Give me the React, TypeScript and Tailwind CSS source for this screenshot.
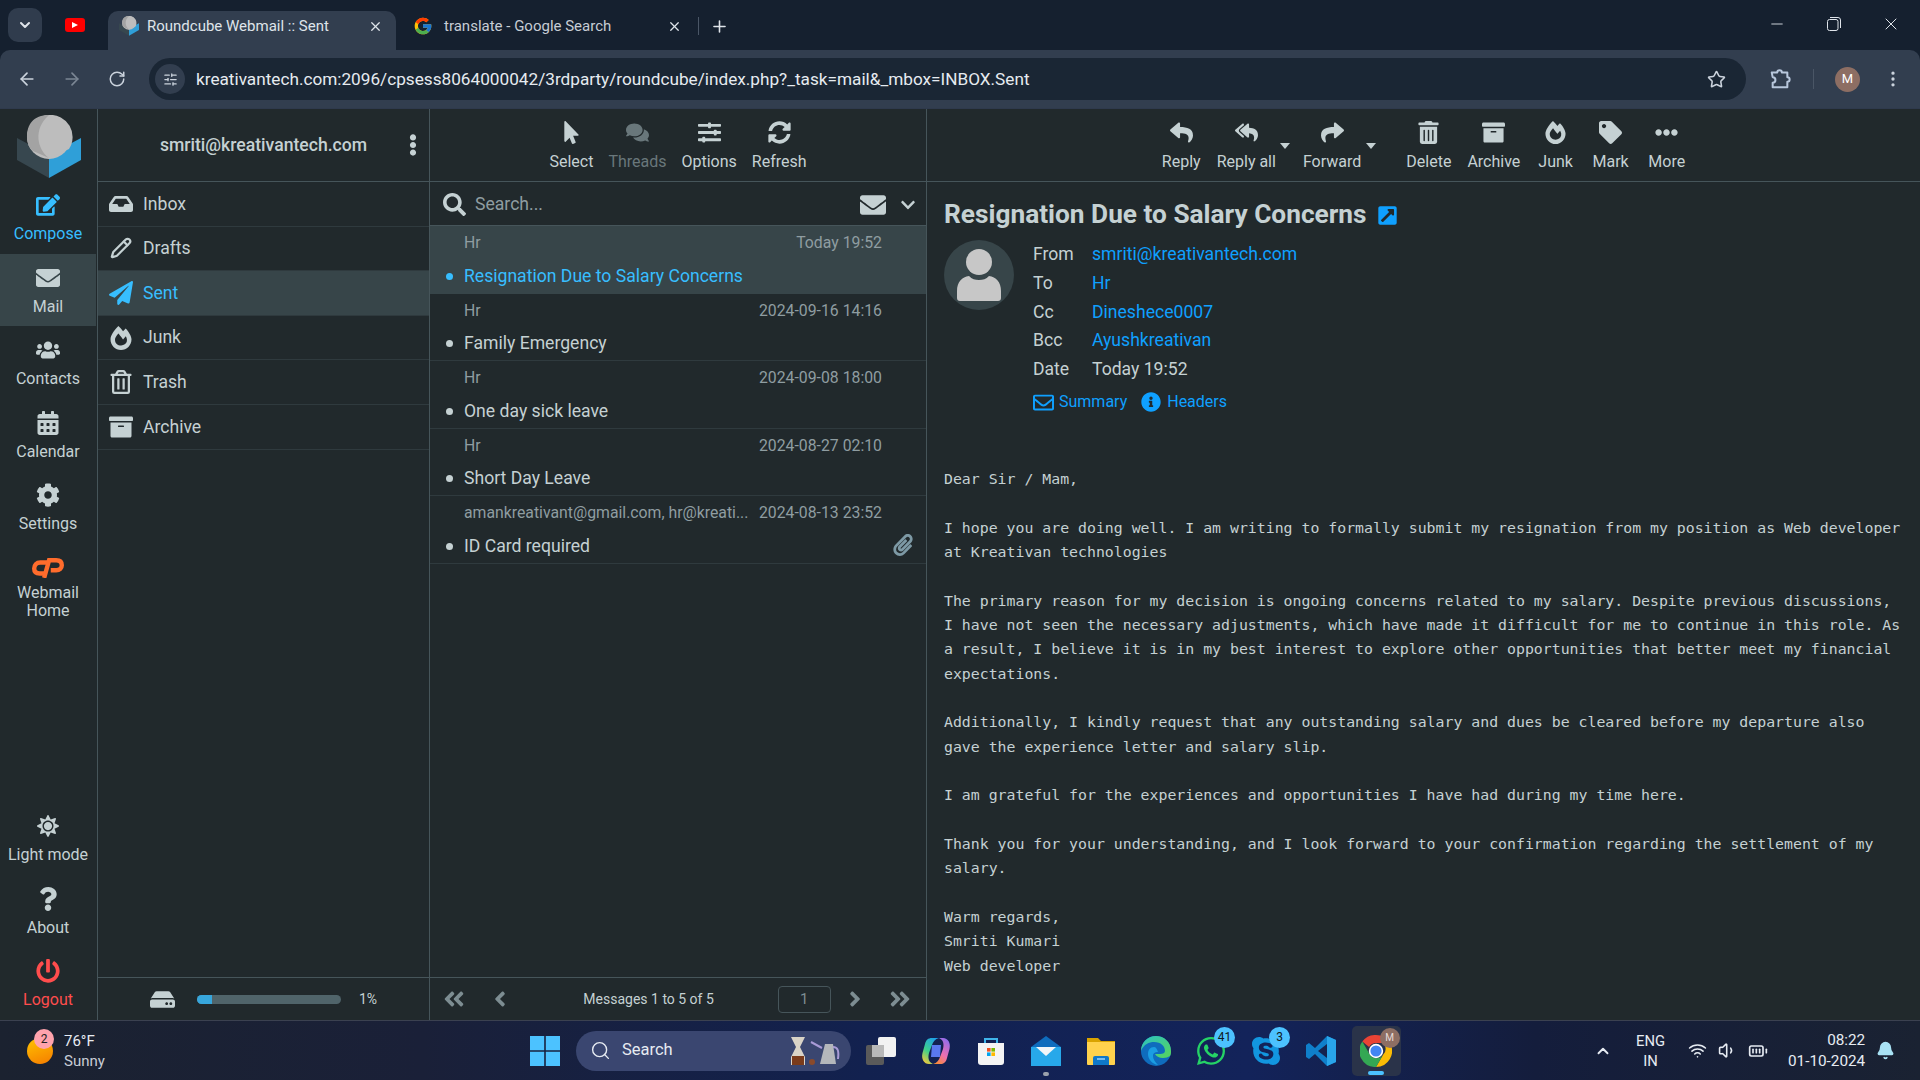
import type { ReactNode } from "react";
import {
  FaAngleDoubleLeft,
  FaAngleDoubleRight,
  FaAngleLeft,
  FaAngleRight,
  FaArchive,
  FaCalendarAlt,
  FaChevronDown,
  FaCog,
  FaComments,
  FaEdit,
  FaEllipsisH,
  FaEllipsisV,
  FaEnvelope,
  FaExternalLinkSquareAlt,
  FaFireAlt,
  FaHdd,
  FaInbox,
  FaInfoCircle,
  FaMousePointer,
  FaPaperPlane,
  FaPaperclip,
  FaPowerOff,
  FaQuestion,
  FaRegEnvelope,
  FaRegTrashAlt,
  FaReply,
  FaReplyAll,
  FaShare,
  FaSkype,
  FaSlidersH,
  FaSun,
  FaSyncAlt,
  FaTag,
  FaTrashAlt,
  FaUsers,
  FaWhatsapp,
  FaSearch,
} from "react-icons/fa";
import { FcGoogle } from "react-icons/fc";
import {
  ArrowLeft,
  ArrowRight,
  BatteryFull,
  Bell,
  ChevronDown,
  ChevronUp,
  EllipsisVertical,
  Minus,
  Pencil,
  Plus,
  RotateCw,
  Search,
  SlidersHorizontal,
  Star,
  Volume1,
  Wifi,
  X,
} from "lucide-react";

const bodyLines = [
  "Dear Sir / Mam,",
  "",
  "I hope you are doing well. I am writing to formally submit my resignation from my position as Web developer",
  "at Kreativan technologies",
  "",
  "The primary reason for my decision is ongoing concerns related to my salary. Despite previous discussions,",
  "I have not seen the necessary adjustments, which have made it difficult for me to continue in this role. As",
  "a result, I believe it is in my best interest to explore other opportunities that better meet my financial",
  "expectations.",
  "",
  "Additionally, I kindly request that any outstanding salary and dues be cleared before my departure also",
  "gave the experience letter and salary slip.",
  "",
  "I am grateful for the experiences and opportunities I have had during my time here.",
  "",
  "Thank you for your understanding, and I look forward to your confirmation regarding the settlement of my",
  "salary.",
  "",
  "Warm regards,",
  "Smriti Kumari",
  "Web developer",
];

const messages = [
  { from: "Hr", date: "Today 19:52", subject: "Resignation Due to Salary Concerns", selected: true },
  { from: "Hr", date: "2024-09-16 14:16", subject: "Family Emergency" },
  { from: "Hr", date: "2024-09-08 18:00", subject: "One day sick leave" },
  { from: "Hr", date: "2024-08-27 02:10", subject: "Short Day Leave" },
  {
    from: "amankreativant@gmail.com, hr@kreati...",
    date: "2024-08-13 23:52",
    subject: "ID Card required",
    attachment: true,
  },
];

function RoundcubeLogo({ className }: { className?: string }) {
  return (
    <svg viewBox="0 0 64 64" className={className}>
      <path d="M0 23 32 40v23L0 45z" fill="#37474f" />
      <path d="M64 23 32 40v23l32-18z" fill="#2f9fd8" />
      <circle cx="32" cy="22" r="22" fill="#bdbdbd" />
      <path d="M32 0a22 22 0 0 1 20 34L32 43C20 36 12 30 12 20 12 10 20 2 32 0z" fill="#bdbdbd" />
      <path d="M32 0C16 0 10 10 10 22c0 7 3 12 6 14L32 43C20 34 16 14 32 0z" fill="#a3a3a3" />
    </svg>
  );
}

function SideItem({
  icon,
  label,
  active,
  className = "text-[#c5d1d3]",
}: {
  icon: ReactNode;
  label: ReactNode;
  active?: boolean;
  className?: string;
}) {
  return (
    <div
      className={`flex h-[72.6px] w-[96px] flex-col items-center pt-[11px] text-center text-[16px] leading-[18px] ${className} ${
        active ? "bg-[#374549]" : ""
      }`}
    >
      <div className="flex h-[26px] items-center text-[24px]">{icon}</div>
      <div className="mt-[7px]">{label}</div>
    </div>
  );
}

function Folder({ icon, label, active }: { icon: ReactNode; label: string; active?: boolean }) {
  return (
    <div
      className={`flex h-[44.6px] items-center border-b border-[#2f3a3e] pl-[9px] text-[17.6px] ${
        active ? "bg-[#374549] text-[#37beff]" : "text-[#c5d1d3]"
      }`}
    >
      <div className="flex w-[28px] justify-center text-[24px]">{icon}</div>
      <span className="ml-[8px]">{label}</span>
    </div>
  );
}

function ToolButton({
  icon,
  label,
  dim,
  className = "",
}: {
  icon: ReactNode;
  label: string;
  dim?: boolean;
  className?: string;
}) {
  return (
    <div className={`flex flex-col items-center ${dim ? "text-[#69777b]" : "text-[#c5d1d3]"} ${className}`}>
      <div className="flex h-[26px] items-center text-[23px]">{icon}</div>
      <span className="mt-[8px] text-[16px] leading-[18px]">{label}</span>
    </div>
  );
}

function HeaderRow({ label, value, link = true }: { label: string; value: string; link?: boolean }) {
  return (
    <div className="flex h-[28.7px] items-center text-[17.6px]">
      <span className="w-[59px] text-[#c5d1d3]">{label}</span>
      <span className={link ? "text-[#0fa0ff]" : "text-[#c5d1d3]"}>{value}</span>
    </div>
  );
}

function TabBar() {
  return (
    <div className="flex h-[50px] items-end bg-[#15202f] pl-[8px] font-['Roboto',sans-serif] text-[#dfe4ea]">
      <div className="mb-[8px] flex h-[34px] w-[34px] items-center justify-center rounded-[10px] bg-[#303c4d]">
        <ChevronDown size={16} strokeWidth={3} />
      </div>
      <div className="mb-[8px] flex h-[34px] w-[66px] items-center justify-center">
        <div className="flex h-[14px] w-[20px] items-center justify-center rounded-[3px] bg-[#f00]">
          <div className="h-0 w-0 border-y-[3.5px] border-l-[6px] border-y-transparent border-l-white" />
        </div>
      </div>
      <div className="flex h-[39px] w-[288px] items-center rounded-t-[10px] bg-[#323e4f] pb-[9px] pl-[11px] pr-[13px]">
        <RoundcubeLogo className="h-[20px] w-[20px]" />
        <span className="ml-[8px] flex-1 text-[15px]">Roundcube Webmail :: Sent</span>
        <X size={15} />
      </div>
      <div className="flex h-[39px] w-[340px] items-center pb-[9px] pl-[17px] pr-[7px]">
        <FcGoogle size={20} />
        <span className="ml-[11px] flex-1 text-[15px] text-[#c7cdd5]">translate - Google Search</span>
        <X size={15} />
        <div className="ml-[16px] h-[18px] w-px bg-[#4a5666]" />
        <Plus size={19} className="ml-[11px]" />
      </div>
      <div className="flex h-[50px] flex-1 items-center justify-end pb-[2px] pr-[19px]">
        <Minus size={18} strokeWidth={1.2} />
        <svg viewBox="0 0 14 14" className="ml-[41px] h-[14px] w-[14px]" fill="none" stroke="currentColor">
          <rect x="0.5" y="2.5" width="10.5" height="11" rx="2" />
          <path d="M3 .5h8a2.5 2.5 0 0 1 2.5 2.5v8" />
        </svg>
        <X size={20} strokeWidth={1.2} className="ml-[40px]" />
      </div>
    </div>
  );
}

function AddressBar() {
  return (
    <div className="bg-[#15202f]">
      <div className="flex h-[58px] items-center rounded-t-[10px] bg-[#323e4f] pl-[17px] font-['Roboto',sans-serif] text-[#cbd3dd]">
        <ArrowLeft size={20} />
        <ArrowRight size={20} className="ml-[25px] text-[#7b8694]" />
        <RotateCw size={18} className="ml-[26px]" />
        <div className="ml-[23px] flex h-[42px] w-[1597px] shrink-0 items-center rounded-full bg-[#1a2634] pl-[6px] pr-[20px]">
          <div className="flex h-[30px] w-[30px] items-center justify-center rounded-full bg-[#323e4f]">
            <SlidersHorizontal size={15} />
          </div>
          <span className="ml-[11px] flex-1 pt-[1px] text-[17.2px] text-[#e6ebf0]">
            kreativantech.com:2096/cpsess8064000042/3rdparty/roundcube/index.php?_task=mail&amp;_mbox=INBOX.Sent
          </span>
          <Star size={19} />
        </div>
        <svg viewBox="0 0 24 24" className="ml-[23px] h-[22px] w-[22px] text-[#b8c7dc]" fill="none" stroke="currentColor" strokeWidth="2.2">
          <path d="M3 5h6a2.500 2.500 0 0 1 5 0h6v5a2.500 2.500 0 0 1 0 5v6H4v-5a3 3 0 0 0 0-6z" strokeLinejoin="round" />
        </svg>
        <div className="ml-[22px] h-[20px] w-px bg-[#4a5666]" />
        <div className="ml-[21px] flex h-[25px] w-[25px] items-center justify-center rounded-full bg-[#8d6e63] text-[13px] text-white">
          M
        </div>
        <EllipsisVertical size={20} className="ml-[23px]" />
      </div>
    </div>
  );
}

function Sidebar() {
  return (
    <div className="flex w-[98px] shrink-0 flex-col justify-between border-r border-[#46555a]">
      <div>
        <div className="flex h-[72px] items-start justify-center pt-[6px]">
          <RoundcubeLogo className="h-[64px] w-[64px]" />
        </div>
        <SideItem icon={<FaEdit />} label="Compose" className="text-[#37beff]" />
        <SideItem icon={<FaEnvelope />} label="Mail" active />
        <SideItem icon={<FaUsers />} label="Contacts" />
        <SideItem icon={<FaCalendarAlt />} label="Calendar" />
        <SideItem icon={<FaCog />} label="Settings" />
        <div className="flex w-[96px] flex-col items-center pt-[14px] text-center text-[16px] leading-[18px] text-[#c5d1d3]">
          <svg viewBox="0 0 29 18" className="h-[20px] w-[32px]" fill="none" stroke="#ff6c2c" strokeWidth="4">
            <path d="M14 4H7.500C4 4 2 6.500 2 9.500S4 14 7 14h4" />
            <path d="M11 18 15.500 2H22c3.500 0 5 2 5 4.500S25 11 22 11h-5" />
          </svg>
          <div className="mt-[6px]">
            Webmail
            <br />
            Home
          </div>
        </div>
      </div>
      <div>
        <SideItem icon={<FaSun className="text-[22px]" />} label="Light mode" />
        <SideItem icon={<FaQuestion />} label="About" />
        <SideItem icon={<FaPowerOff />} label="Logout" className="text-[#ff4d4d]" />
      </div>
    </div>
  );
}

function FolderPanel() {
  return (
    <div className="flex w-[332px] shrink-0 flex-col border-r border-[#46555a]">
      <div className="flex h-[73px] shrink-0 items-center border-b border-[#46555a] pl-[26px] pr-[6px] text-[#c5d1d3]">
        <span className="flex-1 text-center text-[17.6px] font-medium">smriti@kreativantech.com</span>
        <FaEllipsisV className="w-[20px] text-[22px]" />
      </div>
      <div className="flex-1">
        <Folder icon={<FaInbox />} label="Inbox" />
        <Folder icon={<Pencil size={22} strokeWidth={2.4} />} label="Drafts" />
        <Folder icon={<FaPaperPlane />} label="Sent" active />
        <Folder icon={<FaFireAlt />} label="Junk" />
        <Folder icon={<FaRegTrashAlt />} label="Trash" />
        <Folder icon={<FaArchive />} label="Archive" />
      </div>
      <div className="flex h-[43px] items-center border-t border-[#46555a] pl-[52px] text-[#c5d1d3]">
        <FaHdd className="text-[25px]" />
        <div className="ml-[22px] h-[9px] w-[144px] rounded-full bg-[#50646a]">
          <div className="h-full w-[15px] rounded-l-full bg-[#37a6dc]" />
        </div>
        <span className="ml-[18px] text-[14px]">1%</span>
      </div>
    </div>
  );
}

function MessageList() {
  return (
    <div className="flex w-[497px] shrink-0 flex-col border-r border-[#46555a]">
      <div className="flex h-[73px] shrink-0 items-center justify-center gap-[15px] border-b border-[#46555a]">
        <ToolButton icon={<FaMousePointer />} label="Select" />
        <ToolButton icon={<FaComments />} label="Threads" dim />
        <ToolButton icon={<FaSlidersH />} label="Options" />
        <ToolButton icon={<FaSyncAlt />} label="Refresh" />
      </div>
      <div className="flex h-[44px] shrink-0 items-center border-b border-[#46555a] pl-[13px] pr-[10px] pt-[2px] text-[#c5d1d3]">
        <FaSearch className="text-[23px]" />
        <span className="ml-[9px] flex-1 text-[17.6px] text-[#8f9da1]">Search...</span>
        <FaEnvelope className="text-[26px]" />
        <FaChevronDown className="ml-[14px] text-[16px]" />
      </div>
      <div className="flex-1">
        {messages.map((m) => (
          <div
            key={m.subject}
            className={`h-[67.5px] border-b pl-[16px] pr-[11px] ${
              m.selected ? "border-[#374549] bg-[#374549]" : "border-[#2f3a3e]"
            }`}
          >
            <div className="flex h-[33px] items-center justify-between pl-[18px] pr-[33px] pt-[1px] text-[15.8px] text-[#8f9da1]">
              <span>{m.from}</span>
              <span>{m.date}</span>
            </div>
            <div className="flex h-[34px] items-center">
              <div className={`h-[7px] w-[7px] rounded-full ${m.selected ? "bg-[#37beff]" : "bg-[#c5d1d3]"}`} />
              <span className={`ml-[11px] flex-1 text-[17.6px] ${m.selected ? "text-[#37beff]" : "text-[#c5d1d3]"}`}>
                {m.subject}
              </span>
              {m.attachment && <FaPaperclip className="mb-[3px] mr-[1px] text-[22px] text-[#7d99a5]" />}
            </div>
          </div>
        ))}
      </div>
      <div className="flex h-[43px] items-center border-t border-[#46555a] pl-[12px] text-[#7d8d92]">
        <FaAngleDoubleLeft className="text-[24px]" />
        <FaAngleLeft className="ml-[21.6px] text-[24px]" />
        <span className="w-[266px] pl-[8px] text-center text-[14px] text-[#c5d1d3]">Messages 1 to 5 of 5</span>
        <div className="flex h-[27px] w-[53px] items-center justify-center rounded-[4px] border border-[#46555a] text-[15px]">
          1
        </div>
        <FaAngleRight className="ml-[12px] text-[24px]" />
        <FaAngleDoubleRight className="ml-[21px] text-[24px]" />
      </div>
    </div>
  );
}

function MessageView() {
  return (
    <div className="flex min-w-0 flex-1 flex-col">
      <div className="relative flex h-[73px] shrink-0 items-center justify-center border-b border-[#46555a]">
        <div className="flex gap-[16px]">
          <ToolButton icon={<FaReply />} label="Reply" />
          <ToolButton icon={<FaReplyAll />} label="Reply all" className="mr-[11px]" />
          <ToolButton icon={<FaShare />} label="Forward" className="mr-[29px]" />
          <ToolButton icon={<FaTrashAlt />} label="Delete" />
          <ToolButton icon={<FaArchive />} label="Archive" className="mr-[2px]" />
          <ToolButton icon={<FaFireAlt />} label="Junk" className="mr-[3.6px]" />
          <ToolButton icon={<FaTag />} label="Mark" className="mr-[3.6px]" />
          <ToolButton icon={<FaEllipsisH />} label="More" />
        </div>
        <div className="absolute left-[353px] top-[34px] h-0 w-0 border-x-[5px] border-t-[6px] border-x-transparent border-t-[#c5d1d3]" />
        <div className="absolute left-[439px] top-[34px] h-0 w-0 border-x-[5px] border-t-[6px] border-x-transparent border-t-[#c5d1d3]" />
      </div>
      <div className="px-[17px] pt-[15px]">
        <div className="flex h-[36px] items-center text-[26.25px] font-bold text-[#c5d1d3]">
          Resignation Due to Salary Concerns
          <FaExternalLinkSquareAlt className="ml-[10px] text-[21px] text-[#0fa0ff]" />
        </div>
        <div className="mt-[7px] flex">
          <div className="flex h-[70px] w-[70px] shrink-0 items-center justify-center rounded-full bg-[#374549]">
            <svg viewBox="0 0 44 52" className="h-[52px] w-[44px]" fill="#c7c7c7">
              <ellipse cx="22" cy="13" rx="13" ry="13" />
              <path d="M0 42c0-9 5-14 12-15 3 3 6 4 10 4s7-1 10-4c7 1 12 6 12 15v7a3 3 0 0 1-3 3H3a3 3 0 0 1-3-3z" />
            </svg>
          </div>
          <div className="ml-[19px] flex-1">
            <HeaderRow label="From" value="smriti@kreativantech.com" />
            <HeaderRow label="To" value="Hr" />
            <HeaderRow label="Cc" value="Dineshece0007" />
            <HeaderRow label="Bcc" value="Ayushkreativan" />
            <HeaderRow label="Date" value="Today 19:52" link={false} />
            <div className="mt-[7px] flex h-[24px] items-center text-[16px] text-[#0fa0ff]">
              <FaRegEnvelope className="text-[21px]" />
              <span className="ml-[5px]">Summary</span>
              <FaInfoCircle className="ml-[14px] text-[20px]" />
              <span className="ml-[6px]">Headers</span>
            </div>
          </div>
        </div>
        <div className="mt-[52.5px] whitespace-pre font-['DejaVu_Sans_Mono',monospace] text-[14.85px] leading-[24.35px] text-[#c5d1d3]">
          {bodyLines.map((line, i) => (
            <div key={i} className="h-[24.35px]">
              {line}
            </div>
          ))}
        </div>
      </div>
    </div>
  );
}

function TaskIcon({ children, badge, className = "" }: { children: ReactNode; badge?: string; className?: string }) {
  return (
    <div className={`relative flex h-[50px] w-[55px] items-center justify-center ${className}`}>
      {children}
      {badge && (
        <div className="absolute right-[3px] top-[1px] flex h-[21px] min-w-[21px] items-center justify-center rounded-full bg-[#4cc2ff] px-[2px] text-[12px] text-[#101820]">
          {badge}
        </div>
      )}
    </div>
  );
}

function Taskbar() {
  return (
    <div className="flex h-[60px] items-center border-t border-[#3b4150] bg-[linear-gradient(90deg,#1b2230_0%,#1a2038_22%,#12214f_45%,#13235a_65%,#141d3c_80%,#1a2232_100%)] font-['Roboto',sans-serif] text-[#e6ebf2]">
      <div className="relative ml-[27px] h-[26px] w-[26px] rounded-full bg-[linear-gradient(160deg,#ffc400,#f57c00)]">
        <div className="absolute -top-[9px] left-[7px] flex h-[20px] w-[20px] items-center justify-center rounded-full bg-[#ffa3ad] text-[12px] text-[#222]">
          2
        </div>
      </div>
      <div className="ml-[11px] w-[466px] text-[15px] leading-[20px]">
        <div>76°F</div>
        <div className="text-[#c8cdd6]">Sunny</div>
      </div>
      <svg viewBox="0 0 30 30" className="h-[30px] w-[30px]">
        <path d="M0 0h14.2v14.2H0zM15.8 0H30v14.2H15.8zM0 15.8h14.2V30H0zM15.8 15.8H30V30H15.8z" fill="#4cc2ff" />
      </svg>
      <div className="ml-[16px] flex h-[40px] w-[275px] items-center rounded-full bg-[#3a4670] pl-[14px] pr-[8px]">
        <Search size={21} strokeWidth={1.6} />
        <span className="ml-[11px] flex-1 text-[16.5px]">Search</span>
        <svg viewBox="0 0 54 30" className="h-[30px] w-[54px]">
          <path d="M2 1h14l-5 10 5 10v8H2v-8l5-10z" fill="#d9d3c7" />
          <path d="M3 20h12v9H3z" fill="#7a3b1b" />
          <path d="M36 8h8l3 20H31z" fill="#b4b7bb" />
          <path d="M33 12 22 6M44 11c5 0 6 4 5 12" fill="none" stroke="#a99bd6" strokeWidth="2" />
          <circle cx="23" cy="26" r="3" fill="#8a4a2b" />
        </svg>
      </div>
      <TaskIcon className="ml-[2px]">
        <div className="relative h-[28px] w-[30px]">
          <div className="absolute bottom-0 left-0 h-[20px] w-[18px] rounded-[2px] bg-[#5a5a5a]" />
          <div className="absolute right-0 top-0 h-[20px] w-[18px] rounded-[2px] bg-[#f2f2f2]" />
          <div className="absolute bottom-[8px] left-[6px] h-[12px] w-[12px] bg-[#b9b9b9]" />
        </div>
      </TaskIcon>
      <TaskIcon>
        <svg viewBox="0 0 30 30" className="h-[32px] w-[30px]">
          <defs>
            <linearGradient id="cpl" x1="0.7" y1="0" x2="0.2" y2="1">
              <stop offset="0" stopColor="#1fa2e8" />
              <stop offset="0.55" stopColor="#3fd08a" />
              <stop offset="1" stopColor="#f5c93c" />
            </linearGradient>
            <linearGradient id="cpr" x1="0.8" y1="0" x2="0.3" y2="1">
              <stop offset="0" stopColor="#8b6cf0" />
              <stop offset="0.6" stopColor="#ee6fb0" />
              <stop offset="1" stopColor="#f78a3c" />
            </linearGradient>
          </defs>
          <path d="M11 9h9l-1 12h-9z" fill="#5a78ee" />
          <path d="M18 2H11C7 2 5 4 4 8L1.500 17C0 23 3 28 8 28h4C7 26 7 21 8 17l3-8c1-3 3-6 7-7z" fill="url(#cpl)" />
          <path d="M12 28h7c4 0 6-2 7-6l2.500-9C30 7 27 2 22 2h-4c5 2 5 7 4 11l-3 8c-1 3-3 6-7 7z" fill="url(#cpr)" />
        </svg>
      </TaskIcon>
      <TaskIcon>
        <svg viewBox="0 0 30 30" className="h-[32px] w-[30px]">
          <path d="M9 7V3h12v4" fill="none" stroke="#3fb4ea" strokeWidth="2" />
          <path d="M2 7h26v19a3 3 0 0 1-3 3H5a3 3 0 0 1-3-3z" fill="#f4f4f4" />
          <path d="M11 12h3.6v3.6H11z" fill="#f25022" />
          <path d="M15.4 12H19v3.6h-3.6z" fill="#7fba00" />
          <path d="M11 16.4h3.6V20H11z" fill="#00a4ef" />
          <path d="M15.4 16.4H19V20h-3.6z" fill="#ffb900" />
        </svg>
      </TaskIcon>
      <TaskIcon>
        <svg viewBox="0 0 30 30" className="h-[30px] w-[30px]">
          <path d="M15 0 30 11v19H0V11z" fill="#0f6cbd" />
          <path d="M0 11h30v19H0z" fill="#27a8ea" />
          <path d="M5 11h20l-10 9z" fill="#f2f5f8" />
        </svg>
        <div className="absolute bottom-0 h-[4px] w-[6px] rounded-full bg-[#9aa1ac]" />
      </TaskIcon>
      <TaskIcon>
        <svg viewBox="0 0 30 30" className="h-[30px] w-[30px]">
          <path d="M1 2h11l3 3h14v4H1z" fill="#d9a300" />
          <path d="M1 6h28v22a1 1 0 0 1-1 1H2a1 1 0 0 1-1-1z" fill="#ffd24d" />
          <path d="M9 20h12a2 2 0 0 1 2 2v7H7v-7a2 2 0 0 1 2-2z" fill="#0f78c9" />
          <path d="M11 23h8" stroke="#9bd4ff" strokeWidth="1.5" />
        </svg>
      </TaskIcon>
      <TaskIcon>
        <svg viewBox="0 0 30 30" className="h-[30px] w-[30px]">
          <defs>
            <linearGradient id="eg" x1="0" y1="0" x2="1" y2="1">
              <stop offset="0" stopColor="#2bc2c4" />
              <stop offset="1" stopColor="#57d45a" />
            </linearGradient>
          </defs>
          <circle cx="15" cy="15" r="15" fill="#0f6cbd" />
          <path d="M15 0C6 0 0 7 0 15c3-7 8-9 13-9 7 0 11 4 11 9 0 2-2 3-5 3h-5c1 2 4 4 8 4 3 0 5-1 7-2 1-2 1-3 1-5C30 6 23 0 15 0z" fill="url(#eg)" />
          <path d="M13 11c-4 0-6 3-6 7 0 5 4 10 10 11-3-3-5-6-5-9 0-3 2-4 5-4-1-3-2-5-4-5z" fill="#1b9de2" />
        </svg>
      </TaskIcon>
      <TaskIcon badge="41">
        <FaWhatsapp size={32} className="text-[#25d366]" />
      </TaskIcon>
      <TaskIcon badge="3">
        <FaSkype size={32} className="text-[#1296e0]" />
      </TaskIcon>
      <TaskIcon>
        <svg viewBox="0 0 30 30" className="h-[30px] w-[30px]">
          <path d="M21 0 30 4v22l-9 4-12-12-6 5-3-2V9l3-2 6 5z" fill="#0f7fcb" />
          <path d="M21 0 30 4v22l-9 4z" fill="#29a5ea" />
          <path d="M21 8 12 15l9 7z" fill="#15234f" />
        </svg>
      </TaskIcon>
      <div className="relative ml-[3.5px] flex h-[50px] w-[49px] items-center justify-center rounded-[5px] bg-[#2a3349]">
        <svg viewBox="0 0 30 30" className="h-[32px] w-[32px]">
          <path d="M15 0a15 15 0 0 1 13 7.500H15a7.500 7.500 0 0 0-6.500 3.800L2.200 6.200A15 15 0 0 1 15 0z" fill="#ea4335" />
          <path d="M28 7.500a15 15 0 0 1-13 22.500l6.500-11.200a7.500 7.500 0 0 0 0-11.300z" fill="#fbbc05" />
          <path d="M15 30A15 15 0 0 1 2.200 6.200l6.300 11A7.500 7.500 0 0 0 21.500 18.800L15 30z" fill="#34a853" />
          <circle cx="15" cy="15" r="6" fill="#4285f4" stroke="#fff" strokeWidth="1.500" />
        </svg>
        <div className="absolute right-[1px] top-[2px] flex h-[20px] w-[20px] items-center justify-center rounded-full bg-[#8d6e63] text-[10px] text-[#e8dcd8]">
          M
        </div>
        <div className="absolute bottom-[1px] h-[4px] w-[16px] rounded-full bg-[#4cc2ff]" />
      </div>
      <div className="flex flex-1 items-center">
        <ChevronUp size={18} strokeWidth={2.5} className="ml-[193px]" />
        <div className="ml-[21px] w-[36px] text-center text-[14.8px] leading-[20px]">
          ENG
          <br />
          IN
        </div>
        <Wifi size={19} className="ml-[19.5px]" />
        <Volume1 size={19} className="ml-[11px]" />
        <BatteryFull size={20} className="ml-[10.6px]" />
        <div className="ml-[20.4px] text-right text-[15.3px] leading-[21px]">
          08:22
          <br />
          01-10-2024
        </div>
        <Bell size={19} fill="#a9e3f5" className="ml-[11px] text-[#a9e3f5]" />
      </div>
    </div>
  );
}

export default function App() {
  return (
    <div className="flex h-[1080px] w-[1920px] flex-col overflow-hidden bg-[#21292c] font-['Roboto',sans-serif]">
      <TabBar />
      <AddressBar />
      <div className="flex min-h-0 flex-1 border-t border-[#2f3a4d]">
        <Sidebar />
        <FolderPanel />
        <MessageList />
        <MessageView />
      </div>
      <Taskbar />
    </div>
  );
}
